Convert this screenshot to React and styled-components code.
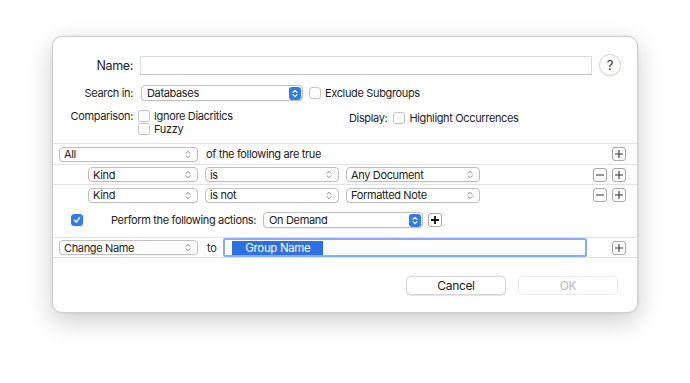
import React from 'react'
import styled, { createGlobalStyle } from 'styled-components'

const Global = createGlobalStyle`
  html, body {
    margin: 0;
    background: #ffffff;
  }
  body {
    font-family: Inter, "Liberation Sans", sans-serif;
    letter-spacing: -0.35px;
    color: #1d1d1f;
  }
`;

const Page = styled.div`
  width: 690px;
  height: 383px;
  padding: 36px 0 0 52px;
  box-sizing: border-box;
`;

const Dialog = styled.div`
  width: 586px;
  height: 277px;
  box-sizing: border-box;
  background: #fff;
  border: 1px solid #cfcfcf;
  border-radius: 10px;
  box-shadow: 0 8px 26px rgba(0, 0, 0, 0.2), 0 0 3px rgba(0, 0, 0, 0.1);
  display: flex;
  flex-direction: column;
  overflow: hidden;
  font-size: 11px;
`;

/* Top section */

const Top = styled.div`
  display: flex;
  flex-direction: column;
  padding-top: 17px;
  height: 106px;
  box-sizing: border-box;
`;

const Row = styled.div`
  display: flex;
  align-items: ${p => p.$top ? 'flex-start' : 'center'};
  margin-top: ${p => p.$mt || 0}px;
`;

const Label = styled.div`
  width: 80px;
  text-align: right;
  font-size: ${p => p.$big ? '12.5px' : '11px'};
  flex-shrink: 0;
`;

const NameField = styled.div`
  margin-left: 7px;
  width: 452px;
  height: 19px;
  box-sizing: border-box;
  border: 1px solid #dcdcdc;
  border-bottom-color: #c4c4c4;
  background: #fff;
`;

const HelpButton = styled.div`
  margin-left: 7px;
  width: 20px;
  height: 20px;
  border-radius: 50%;
  border: 1px solid #d4d4d4;
  box-shadow: 0 0.5px 1px rgba(0, 0, 0, 0.12);
  display: flex;
  align-items: center;
  justify-content: center;
  font-size: 13px;
  color: #333;
`;

const Popup = styled.div`
  width: ${p => p.$w}px;
  height: ${p => p.$h || 15}px;
  margin-left: ${p => p.$ml || 0}px;
  box-sizing: border-box;
  border: 1px solid #bfbfbf;
  border-radius: 4px;
  background: #fff;
  box-shadow: 0 0.5px 0.5px rgba(0, 0, 0, 0.08);
  display: flex;
  align-items: center;
  padding-left: ${p => p.$pl || 4}px;
  font-size: 11px;
  color: #222;
  flex-shrink: 0;
`;

const PopupText = styled.span`
  flex: 1;
`;

const Chevrons = styled.svg`
  width: 6px;
  height: 9px;
  margin-right: 6px;
`;

const BlueStepper = styled.div`
  width: 12px;
  height: 13px;
  margin-right: 1px;
  border-radius: 3px;
  background: #2f7bf5;
  display: flex;
  align-items: center;
  justify-content: center;
`;

const UpDown = ({ color = '#8a8a8a' }) => (
  <Chevrons viewBox="0 0 6 9">
    <path d="M1 3.3 L3 1.3 L5 3.3 M1 5.7 L3 7.7 L5 5.7" fill="none" stroke={color} strokeWidth="1" strokeLinecap="round" strokeLinejoin="round" />
  </Chevrons>
);

const Select = ({ w, h, ml, pl, blue, children }) => (
  <Popup $w={w} $h={h} $ml={ml} $pl={pl}>
    <PopupText>{children}</PopupText>
    {blue ? (
      <BlueStepper>
        <svg width="6" height="9" viewBox="0 0 6 9">
          <path d="M1 3.3 L3 1.3 L5 3.3 M1 5.7 L3 7.7 L5 5.7" fill="none" stroke="#fff" strokeWidth="1.2" strokeLinecap="round" strokeLinejoin="round" />
        </svg>
      </BlueStepper>
    ) : <UpDown />}
  </Popup>
);

const Box = styled.div`
  width: 12px;
  height: 12px;
  box-sizing: border-box;
  border-radius: 3px;
  border: 1px solid ${p => p.$checked ? '#2f7bf5' : '#c6c6c6'};
  background: ${p => p.$checked ? '#2f7bf5' : '#fff'};
  box-shadow: 0 0.5px 0.5px rgba(0, 0, 0, 0.08);
  display: flex;
  align-items: center;
  justify-content: center;
  flex-shrink: 0;
`;

const Check = styled.label`
  display: flex;
  align-items: center;
  margin-left: ${p => p.$ml || 0}px;
  gap: 4px;
  font-size: 11px;
  height: 13px;
`;

const Checkbox = ({ checked, ml, children }) => (
  <Check $ml={ml}>
    <Box $checked={checked}>
      {checked && (
        <svg width="8" height="8" viewBox="0 0 8 8">
          <path d="M1.5 4.2 L3.3 6 L6.6 1.8" fill="none" stroke="#fff" strokeWidth="1.5" strokeLinecap="round" strokeLinejoin="round" />
        </svg>
      )}
    </Box>
    {children}
  </Check>
);

const CheckColumn = styled.div`
  display: flex;
  flex-direction: column;
  width: 211px;
  margin-left: 5px;
`;

const DisplayGroup = styled.div`
  display: flex;
  align-items: center;
  margin-top: 2px;
`;

const Plain = styled.span`
  font-size: 11px;
  margin-left: ${p => p.$ml || 0}px;
  color: #222;
`;

/* Criteria rows */

const Criteria = styled.div`
  border-top: 1px solid #e2e2e2;
`;

const CriteriaRow = styled.div`
  display: flex;
  align-items: center;
  height: ${p => p.$h || 20}px;
  padding-left: ${p => p.$indent}px;
  border-bottom: 1px solid ${p => p.$noline ? 'transparent' : '#e2e2e2'};
  box-sizing: border-box;
`;

const Spacer = styled.div`
  flex: 1;
`;

const SmallButtons = styled.div`
  display: flex;
  gap: 5px;
  margin-right: 11px;
`;

const Square = styled.div`
  width: 14px;
  height: 14px;
  box-sizing: border-box;
  border: 1px solid #a9a9a9;
  border-radius: 3px;
  background: #fff;
  display: flex;
  align-items: center;
  justify-content: center;
  margin-left: ${p => p.$ml || 0}px;
`;

const Sign = ({ minus, bold }) => (
  <svg width="10" height="10" viewBox="0 0 10 10">
    <path d={minus ? 'M1 5 H9' : 'M1 5 H9 M5 1 V9'} stroke={bold ? '#111' : '#333'} strokeWidth={bold ? 1.8 : 1.1} />
  </svg>
);

const ActionRow = styled.div`
  display: flex;
  align-items: center;
  height: 32px;
  padding: 0 0 3px 18px;
  box-sizing: border-box;
  border-bottom: 1px solid #e2e2e2;
`;

const ActionLabel = styled.span`
  font-size: 11px;
  margin-left: 28px;
  margin-right: 7px;
  color: #222;
`;

const FocusField = styled.div`
  margin-left: 7px;
  width: 364px;
  height: 19px;
  box-sizing: border-box;
  border: 2px solid #86aef5;
  border-radius: 2px;
  background: #fff;
  display: flex;
  align-items: center;
  padding-left: 7px;
`;

const Selection = styled.span`
  display: inline-block;
  width: 91px;
  height: 14px;
  line-height: 14px;
  background: #2f6fe6;
  color: #fff;
  font-size: 11.5px;
  text-align: center;
`;

/* Footer */

const Footer = styled.div`
  display: flex;
  justify-content: flex-end;
  gap: 12px;
  padding: 18px 19px 0 0;
`;

const Button = styled.div`
  width: 100px;
  height: 19px;
  box-sizing: border-box;
  border-radius: 5px;
  border: 1px solid ${p => p.$disabled ? '#ececec' : '#d6d6d6'};
  background: #fff;
  box-shadow: ${p => p.$disabled ? 'none' : '0 0.5px 1px rgba(0,0,0,0.12)'};
  display: flex;
  align-items: center;
  justify-content: center;
  font-size: 12px;
  color: ${p => p.$disabled ? '#b8b8b8' : '#1d1d1f'};
`;

export default function App() {
  return (
    <>
      <Global />
      <Page>
        <Dialog>
          <Top>
            <Row>
              <Label $big>Name:</Label>
              <NameField />
              <HelpButton>?</HelpButton>
            </Row>
            <Row $mt={9}>
              <Label>Search in:</Label>
              <Select w={162} h={16} ml={8} pl={5} blue>Databases</Select>
              <Checkbox ml={6}>Exclude Subgroups</Checkbox>
            </Row>
            <Row $top $mt={8}>
              <Label>Comparison:</Label>
              <CheckColumn>
                <Checkbox>Ignore Diacritics</Checkbox>
                <Checkbox>Fuzzy</Checkbox>
              </CheckColumn>
              <DisplayGroup>
                <Plain>Display:</Plain>
                <Checkbox ml={6}>Highlight Occurrences</Checkbox>
              </DisplayGroup>
            </Row>
          </Top>

          <Criteria>
            <CriteriaRow $indent={6} $h={21}>
              <Select w={139}>All</Select>
              <Plain $ml={8}>of the following are true</Plain>
              <Spacer />
              <SmallButtons>
                <Square><Sign /></Square>
              </SmallButtons>
            </CriteriaRow>
            <CriteriaRow $indent={35}>
              <Select w={110}>Kind</Select>
              <Select w={134} ml={7}>is</Select>
              <Select w={134} ml={7}>Any Document</Select>
              <Spacer />
              <SmallButtons>
                <Square><Sign minus /></Square>
                <Square><Sign /></Square>
              </SmallButtons>
            </CriteriaRow>
            <CriteriaRow $indent={35} $h={21} $noline>
              <Select w={110}>Kind</Select>
              <Select w={134} ml={7}>is not</Select>
              <Select w={134} ml={7}>Formatted Note</Select>
              <Spacer />
              <SmallButtons>
                <Square><Sign minus /></Square>
                <Square><Sign /></Square>
              </SmallButtons>
            </CriteriaRow>
          </Criteria>

          <ActionRow>
            <Checkbox checked />
            <ActionLabel>Perform the following actions:</ActionLabel>
            <Select w={160} h={16} pl={5} blue>On Demand</Select>
            <Square $ml={5}><Sign bold /></Square>
          </ActionRow>

          <CriteriaRow $indent={6}>
            <Select w={139}>Change Name</Select>
            <Plain $ml={9}>to</Plain>
            <FocusField>
              <Selection>Group Name</Selection>
            </FocusField>
            <Spacer />
            <SmallButtons>
              <Square><Sign /></Square>
            </SmallButtons>
          </CriteriaRow>

          <Footer>
            <Button>Cancel</Button>
            <Button $disabled>OK</Button>
          </Footer>
        </Dialog>
      </Page>
    </>
  )
}
